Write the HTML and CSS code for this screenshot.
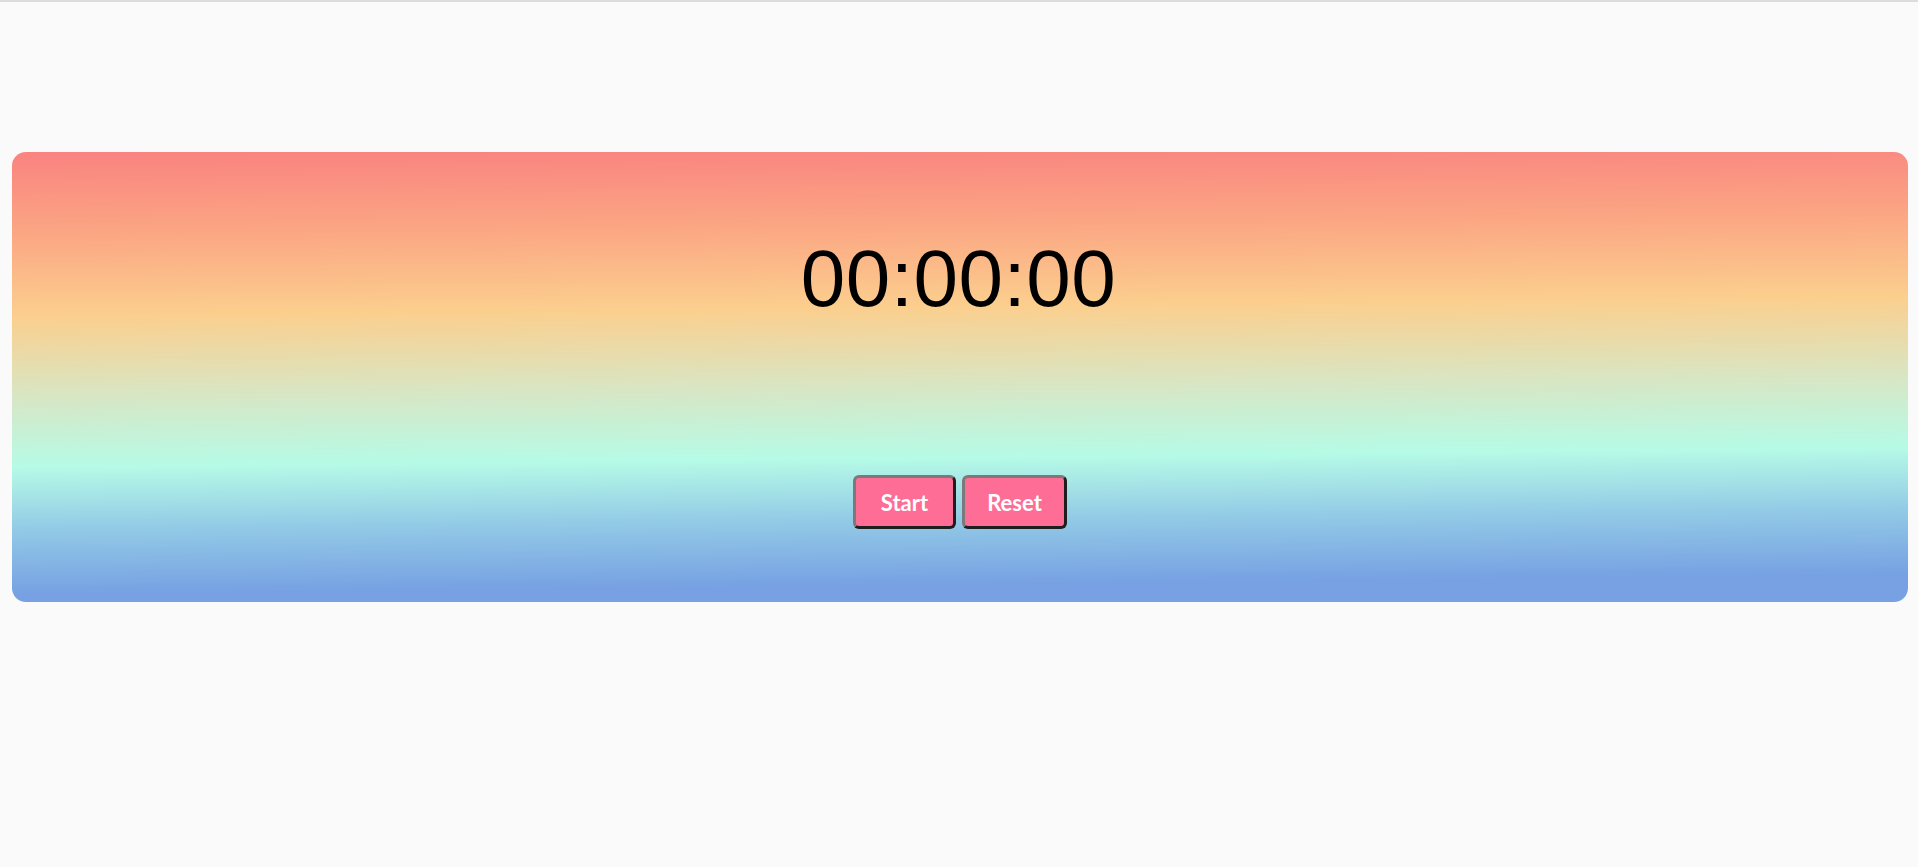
FILE: index.html
```html
<!DOCTYPE html>
<html lang="en">
<head>
<meta charset="utf-8">
<title>Stopwatch</title>
<link rel="stylesheet" href="styles.css">
</head>
<body>
<div class="topline"></div>
<main class="page">
  <section class="card">
    <div class="timer">00:00:00</div>
    <div class="controls">
      <button class="btn btn-start">Start</button>
      <button class="btn btn-reset">Reset</button>
    </div>
  </section>
</main>
</body>
</html>
```

FILE: styles.css
```css
html, body {
  margin: 0;
  padding: 0;
  background: #fafafa;
}
.topline {
  height: 2px;
  background: #dcdcdf;
}
.page {
  padding: 150px 10px 0 12px;
}
.card {
  height: 450px;
  box-sizing: border-box;
  border-radius: 14px;
  background: linear-gradient(179.4deg, #f98380 0%, #fba583 17%, #fbcf8e 35%, #d8e6c4 52%, #b6fbe6 67%, #93cbe6 80%, #77a1e3 94%, #77a1e3 100%);
  padding-top: 87px;
  display: flex;
  flex-direction: column;
  align-items: center;
}
.timer {
  font-family: "Liberation Sans", Arial, sans-serif;
  font-size: 80px;
  line-height: 80px;
  letter-spacing: 0.5px;
  color: #000;
  margin-left: -3px;
}
.controls {
  margin-top: 156px;
  display: flex;
  gap: 6px;
}
.btn {
  height: 54px;
  box-sizing: border-box;
  border: 3px solid;
  border-color: #7a7a7a #1e1e1e #1e1e1e #7a7a7a;
  border-radius: 6px;
  background: #fe6d95;
  color: #fff;
  font-family: "Comic Sans MS", "Lato", sans-serif;
  font-weight: 700;
  font-size: 22px;
  padding: 0;
}
.btn-start { width: 103px; }
.btn-reset { width: 105px; }
```
